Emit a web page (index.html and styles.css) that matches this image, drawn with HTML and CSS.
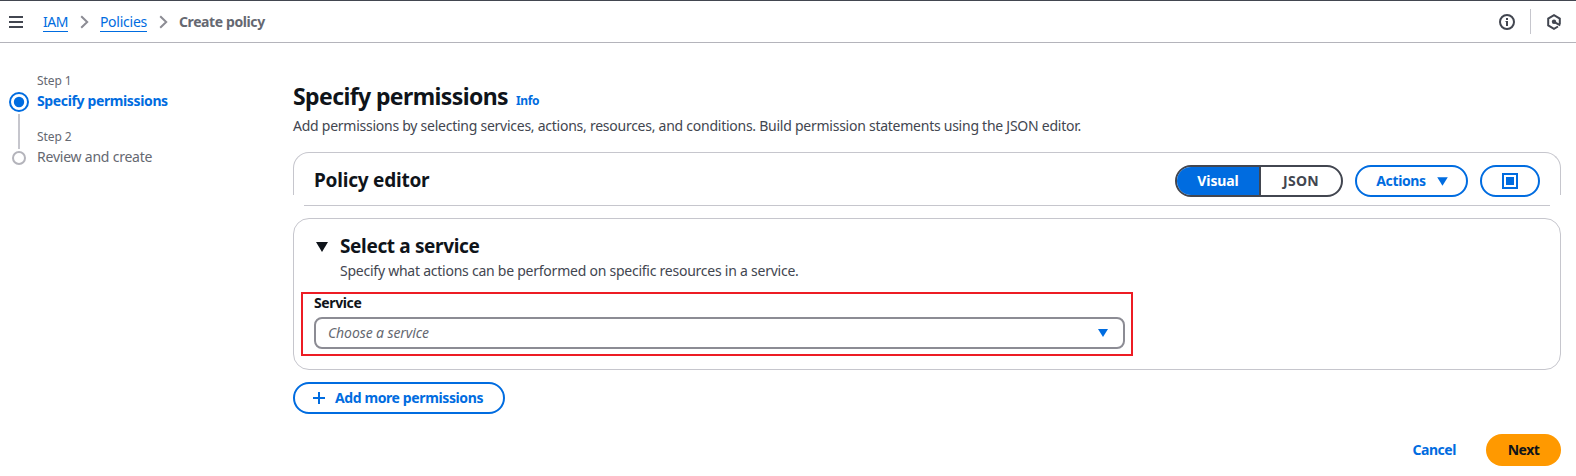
FILE: index.html
```html
<!DOCTYPE html>
<html lang="en">
<head>
<meta charset="utf-8">
<title>Create policy</title>
<link rel="stylesheet" href="styles.css">
</head>
<body>
<header class="topbar">
  <svg class="menu" width="14" height="12" viewBox="0 0 14 12"><path d="M0 1h14M0 6h14M0 11h14" stroke="#424650" stroke-width="2"/></svg>
  <nav class="crumbs">
    <a class="crumb iam">IAM</a>
    <svg class="chevron" width="9" height="14" viewBox="0 0 9 14"><path d="M1.2 1.2 7.2 7l-6 5.8" fill="none" stroke="#8c8c94" stroke-width="2"/></svg>
    <a class="crumb">Policies</a>
    <svg class="chevron" width="9" height="14" viewBox="0 0 9 14"><path d="M1.2 1.2 7.2 7l-6 5.8" fill="none" stroke="#8c8c94" stroke-width="2"/></svg>
    <span class="current">Create policy</span>
  </nav>
  <div class="tools">
    <svg width="16" height="16" viewBox="0 0 16 16"><circle cx="8" cy="8" r="7" fill="none" stroke="#424650" stroke-width="2"/><path d="M8 4v2M8 7v5" fill="none" stroke="#424650" stroke-width="2"/><path d="M6.5 7.5H8" stroke="#424650" stroke-width="1"/></svg>
    <span class="divider"></span>
    <svg width="16" height="16" viewBox="0 0 16 16"><path d="M13.8 10V4.6L8 1.2 2.2 4.6v6.8L8 14.8l4-2.3" fill="none" stroke="#424650" stroke-width="2"/><circle cx="8" cy="7.8" r="2.2" fill="#424650"/><path d="m8 7.8 6.3 3.6" stroke="#424650" stroke-width="2"/></svg>
  </div>
</header>
<div class="layout">
  <aside class="steps">
    <svg class="track" width="20" height="90" viewBox="0 0 20 90">
      <circle cx="10" cy="10" r="9" fill="none" stroke="#006ce0" stroke-width="2"/><circle cx="10" cy="10" r="5.2" fill="#006ce0"/>
      <path d="M10 22v35" stroke="#c6c6cd" stroke-width="2"/>
      <circle cx="10" cy="66" r="6" fill="none" stroke="#b4b4bb" stroke-width="2"/>
    </svg>
    <div class="step-list">
      <div class="step"><span class="step-no">Step 1</span><b class="step-name active">Specify permissions</b></div>
      <div class="step"><span class="step-no">Step 2</span><span class="step-name">Review and create</span></div>
    </div>
  </aside>
  <main class="content">
    <div class="heading"><h1>Specify permissions</h1><a class="info">Info</a></div>
    <p class="desc">Add permissions by selecting services, actions, resources, and conditions. Build permission statements using the JSON editor.</p>
    <section class="editor">
      <div class="editor-head">
        <h2>Policy editor</h2>
        <div class="actions">
          <div class="segments"><span class="segment on">Visual</span><span class="segment json">JSON</span></div>
          <button class="btn act">Actions<svg width="11" height="9" viewBox="0 0 11 9"><path d="M.2.3h10.6L5.5 8.7z" fill="#006ce0"/></svg></button>
          <button class="btn square"><svg width="16" height="16" viewBox="0 0 16 16"><path d="M1 1h14v14H1z" fill="none" stroke="#006ce0" stroke-width="2"/><path d="M4 4h8v8H4z" fill="#006ce0"/></svg></button>
        </div>
      </div>
      <div class="rule"></div>
    </section>
    <section class="card">
      <div class="card-head">
        <svg width="12" height="10" viewBox="0 0 12 10"><path d="M0 0h12L6 10z" fill="#0f141a"/></svg>
        <h2 class="select-title">Select a service</h2>
      </div>
      <p class="desc sub">Specify what actions can be performed on specific resources in a service.</p>
      <div class="field">
        <label class="label">Service</label>
        <div class="select"><em>Choose a service</em><svg width="10" height="8" viewBox="0 0 10 8"><path d="M0 0h10L5 8z" fill="#006ce0"/></svg></div>
      </div>
    </section>
    <button class="btn add"><svg width="12" height="12" viewBox="0 0 12 12"><path d="M0 6h12M6 0v12" stroke="#006ce0" stroke-width="2"/></svg>Add more permissions</button>
    <div class="footer"><a class="cancel">Cancel</a><button class="next">Next</button></div>
  </main>
</div>
</body>
</html>
```
FILE: styles.css
```css
* { box-sizing: border-box; }
body {
  margin: 0;
  height: 476px;
  overflow: hidden;
  background: #fff;
  color: #0f141a;
  font: 14px/20px "Noto Sans", "Open Sans", sans-serif;
  white-space: nowrap;
}
svg { display: block; flex: none; }
h1, h2, p { margin: 0; }
.topbar {
  display: flex;
  align-items: center;
  height: 43px;
  padding: 0 14px 0 9px;
  border-top: 1px solid #424650;
  border-bottom: 1px solid #b4b4bb;
}
.crumbs { display: flex; align-items: center; margin-left: 20px; }
.crumb {
  height: 20px;
  line-height: 19px;
  color: #006ce0;
  border-bottom: 1px solid #006ce0;
  letter-spacing: -0.25px;
}
.iam { letter-spacing: -0.5px; }
.chevron { margin: 0 11px 0 12px; }
.current { color: #656871; font-weight: 700; letter-spacing: -0.4px; }
.tools { display: flex; align-items: center; margin-left: auto; gap: 15px; }
.divider { width: 1px; height: 25px; background: #c6c6cd; }
.layout { display: flex; }
.steps { display: flex; width: 293px; padding: 28px 0 0 9px; }
.track { margin-top: 21px; }
.step-list { margin-left: 8px; }
.step { height: 56px; color: #656871; }
.step-no { display: block; font-size: 12px; letter-spacing: -0.1px; }
.step-name { display: block; letter-spacing: -0.22px; }
.step-name.active { color: #006ce0; letter-spacing: -0.37px; }
.content { width: 1268px; padding-top: 38px; }
.heading { display: flex; align-items: baseline; height: 33px; }
h1 { font-size: 23px; line-height: 30px; letter-spacing: -0.6px; }
.info { margin-left: 8px; color: #006ce0; font-size: 12px; font-weight: 700; letter-spacing: -0.4px; }
.desc { margin-top: 2px; color: #424650; letter-spacing: -0.253px; }
.editor-head {
  display: flex;
  align-items: flex-start;
  justify-content: space-between;
  height: 43px;
  padding: 12px 20px 0 20px;
  border: 1px solid #c6c6cd;
  border-bottom: 0;
  border-radius: 16px 16px 0 0;
}
.editor { height: 54px; margin-top: 16px; }
.rule { height: 1px; margin: 10px 11px 0; background: #c6c6cd; }
h2 { font-size: 19px; line-height: 30px; letter-spacing: -0.22px; }
.actions { display: flex; gap: 12px; }
.segments {
  display: flex;
  width: 168px;
  height: 32px;
  overflow: hidden;
  border: 2px solid #424650;
  border-radius: 16px;
  font-weight: 700;
}
.segment { width: 80px; line-height: 28px; text-align: center; color: #424650; letter-spacing: 0.3px; }
.segment.on { width: 84px; color: #fff; background: #006ce0; border-right: 2px solid #424650; letter-spacing: -0.1px; }
.btn {
  display: flex;
  align-items: center;
  justify-content: center;
  height: 32px;
  padding: 0;
  background: #fff;
  color: #006ce0;
  border: 2px solid #006ce0;
  border-radius: 16px;
  font: inherit;
  font-weight: 700;
  letter-spacing: -0.38px;
}
.act { width: 113px; padding-left: 1px; gap: 11px; }
.square { width: 60px; }
.card {
  height: 152px;
  margin-top: 12px;
  padding: 14px 0 0 7px;
  border: 1px solid #c6c6cd;
  border-radius: 16px;
}
.card-head { display: flex; align-items: center; gap: 12px; height: 27px; padding-left: 15px; }
.select-title { line-height: 27px; letter-spacing: -0.36px; }
.sub { margin: 1px 0 0 39px; letter-spacing: -0.243px; }
/* Highlight frame around the service picker */
.field {
  width: 832px;
  height: 64px;
  margin-top: 11px;
  padding: 0 6px 0 11px;
  border: 2px solid #ed1c24;
}
.label { display: block; height: 23px; font-weight: 700; line-height: 18px; letter-spacing: -0.38px; }
.select {
  display: flex;
  align-items: center;
  justify-content: space-between;
  height: 32px;
  padding: 0 15px 0 12px;
  border: 2px solid #8c8c94;
  border-radius: 8px;
  color: #656871;
}
.select em { letter-spacing: -0.1px; }
.add { width: 212px; height: 32px; margin-top: 12px; padding-right: 2px; gap: 10px; }
.footer { display: flex; align-items: center; justify-content: flex-end; gap: 30px; margin-top: 20px; }
.cancel { color: #006ce0; font-weight: 700; letter-spacing: -0.45px; }
.next {
  width: 75px;
  height: 32px;
  padding: 0;
  border: 0;
  border-radius: 16px;
  background: #ff9900;
  color: #0f141a;
  font: inherit;
  font-weight: 700;
  letter-spacing: -0.5px;
}
```
